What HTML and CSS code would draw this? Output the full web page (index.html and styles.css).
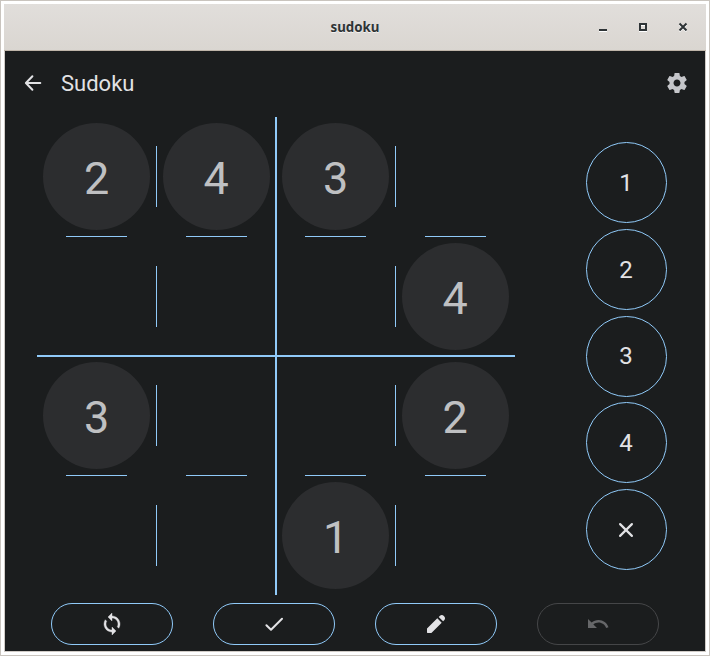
FILE: index.html
```html
<!DOCTYPE html>
<html lang="en">
<head>
<meta charset="utf-8">
<title>sudoku</title>
<link rel="stylesheet" href="styles.css">
</head>
<body>
<div class="window">
  <header class="titlebar">
    <span class="title">sudoku</span>
    <div class="controls">
      <svg viewBox="0 0 10 10"><path class="hi" d="M1 9h8v1H1z"/><path d="M1 7h8v2H1z"/></svg>
      <svg viewBox="0 0 10 10"><path class="hi" d="M1 9h8v1H1zM3 3h4v1H3z"/><path fill-rule="evenodd" d="M1 1h8v8H1zM3 3v4h4V3z"/></svg>
      <svg viewBox="0 0 10 10"><path class="cross hi" d="M1.5 2.5l7 7M8.5 2.5l-7 7"/><path class="cross" d="M1.5 1.5l7 7M8.5 1.5l-7 7"/></svg>
    </div>
  </header>
  <main class="app">
    <div class="appbar">
      <svg class="icon" viewBox="0 0 24 24"><path class="line" d="M19.3 12H5.2M11.4 5.2L4.9 12l6.5 6.8"/></svg>
      <h1>Sudoku</h1>
      <svg class="icon settings" viewBox="0 0 24 24"><path d="M19.43 12.98c.04-.32.07-.64.07-.98s-.03-.66-.07-.98l2.11-1.65c.19-.15.24-.42.12-.64l-2-3.46c-.12-.22-.39-.3-.61-.22l-2.49 1c-.52-.4-1.08-.73-1.69-.98l-.38-2.65C14.46 2.18 14.25 2 14 2h-4c-.25 0-.46.18-.49.42l-.38 2.65c-.61.25-1.17.59-1.69.98l-2.49-1c-.23-.09-.49 0-.61.22l-2 3.46c-.13.22-.07.49.12.64l2.11 1.65c-.04.32-.07.65-.07.98s.03.66.07.98l-2.11 1.65c-.19.15-.24.42-.12.64l2 3.46c.12.22.39.3.61.22l2.49-1c.52.4 1.08.73 1.69.98l.38 2.65c.03.24.24.42.49.42h4c.25 0 .46-.18.49-.42l.38-2.65c.61-.25 1.17-.59 1.69-.98l2.49 1c.23.09.49 0 .61-.22l2-3.46c.12-.22.07-.49-.12-.64zM12 15.5c-1.93 0-3.5-1.57-3.5-3.5s1.57-3.5 3.5-3.5 3.5 1.57 3.5 3.5-1.57 3.5-3.5 3.5z"/></svg>
    </div>
    <div class="game">
      <div class="board">
        <div class="cell"><span class="given">2</span></div>
        <div class="cell"><span class="given">4</span></div>
        <div class="cell"><span class="given">3</span></div>
        <div class="cell"></div>
        <div class="cell"></div>
        <div class="cell"></div>
        <div class="cell"></div>
        <div class="cell"><span class="given">4</span></div>
        <div class="cell"><span class="given">3</span></div>
        <div class="cell"></div>
        <div class="cell"></div>
        <div class="cell"><span class="given">2</span></div>
        <div class="cell"></div>
        <div class="cell"></div>
        <div class="cell"><span class="given">1</span></div>
        <div class="cell"></div>
      </div>
      <div class="pad">
        <div class="key">1</div>
        <div class="key">2</div>
        <div class="key">3</div>
        <div class="key">4</div>
        <div class="key"><svg class="icon" viewBox="0 0 24 24"><path class="line bold" d="M6.1 6.1l11.8 11.8M17.9 6.1L6.1 17.9"/></svg></div>
      </div>
    </div>
    <div class="actions">
      <div class="action"><svg class="icon" viewBox="0 0 24 24"><path class="heavy" d="M12 4V1L8 5l4 4V6c3.31 0 6 2.69 6 6 0 1.01-.25 1.97-.7 2.8l1.46 1.46C19.54 15.03 20 13.57 20 12c0-4.42-3.58-8-8-8zm0 14c-3.31 0-6-2.69-6-6 0-1.01.25-1.97.7-2.8L5.24 7.74C4.46 8.97 4 10.43 4 12c0 4.42 3.58 8 8 8v3l4-4-4-4v3z"/></svg></div>
      <div class="action"><svg class="icon" viewBox="0 0 24 24"><path class="line" d="M4.4 13.2L9 17.8 20 6.8"/></svg></div>
      <div class="action"><svg class="icon" viewBox="0 0 24 24"><path d="M3 16.6V20.5c0 .28.22.5.5.5h3.9L17.7 10.7l-4.4-4.4zM14.7 4.9l4.4 4.4 1.3-1.4c1-1.1.8-2.6-.3-3.7-1.2-1.3-2.9-1.5-4.1-.5z"/></svg></div>
      <div class="action disabled"><svg class="icon" viewBox="0 0 24 24"><path d="M12.5 8c-2.65 0-5.05.99-6.9 2.6L2 7v9h9l-3.62-3.62c1.39-1.16 3.16-1.88 5.12-1.88 3.54 0 6.55 2.31 7.6 5.5l2.37-.78C21.08 11.03 17.15 8 12.5 8z"/></svg></div>
    </div>
  </main>
</div>
</body>
</html>
```
FILE: styles.css
```css
* { box-sizing: border-box; }

body {
  margin: 0;
  height: 656px;
  padding: 3px;
  border: 1px solid #c9c4be;
  background: #fff;
  overflow: hidden;
}

.window { width: 702px; height: 648px; }

.titlebar {
  display: grid;
  grid-template-columns: 1fr auto 1fr;
  align-items: center;
  height: 47px;
  border-bottom: 1px solid #bfb5a9;
  background: linear-gradient(#e1dedb, #dad6d1);
}

.title {
  grid-column: 2;
  font: bold 13.3px/20px "Noto Sans", sans-serif;
  color: #2e3436;
  text-shadow: 0 1px #f3f1ef;
}

.controls {
  display: flex;
  justify-content: flex-end;
  gap: 30px;
  padding-right: 18px;
}

.controls svg { width: 10px; height: 10px; fill: #2e3436; }
.controls .hi { fill: #fff; }
.controls .cross { fill: none; stroke: #2e3436; stroke-width: 2; }
.controls .cross.hi { stroke: #fff; }

.app {
  height: 601px;
  border: 1px solid #d0cbc6;
  border-top: 0;
  background: #1b1d1e;
  color: #e2e2e5;
  font-family: Roboto, sans-serif;
}

.icon { display: block; width: 24px; height: 24px; fill: currentColor; }
.icon .line { fill: none; stroke: currentColor; stroke-width: 2; stroke-linecap: round; stroke-linejoin: round; }
.icon .bold { stroke-width: 2.2; }
.icon .heavy { stroke: currentColor; stroke-width: .4; }

.appbar {
  display: flex;
  align-items: center;
  height: 64px;
  padding: 0 16px;
}

h1 { margin: 0 0 0 16px; padding-top: 2px; font-size: 22px; line-height: 28px; font-weight: 400; }
.settings { margin-left: auto; color: #c5c6ca; }

.game { display: flex; height: 480px; padding: 2px 38.5px 0 32px; justify-content: space-between; }

.board {
  position: relative;
  display: grid;
  grid-template: repeat(4, 119.5px) / repeat(4, 119.5px);
  align-content: start;
}

.board::before, .board::after {
  content: "";
  position: absolute;
  background: #90caf9;
}
.board::before { left: 238px; top: 0; width: 2px; height: 478px; }
.board::after { top: 238px; left: 0; height: 2px; width: 478px; }

.cell { position: relative; display: grid; place-items: center; }

.cell:nth-child(odd)::before,
.cell:nth-child(n+1):nth-child(-n+4)::after,
.cell:nth-child(n+9):nth-child(-n+12)::after {
  content: "";
  position: absolute;
  background: #90caf9;
}
.cell:nth-child(odd)::before { left: 119px; top: 29.2px; width: 1px; height: 61px; }
.cell::after { top: 119px; left: 29.2px; height: 1px; width: 61px; }

.given {
  width: 107px;
  height: 107px;
  border-radius: 50%;
  background: #2c2d2f;
  color: #bfc0c2;
  font-size: 45px;
  line-height: 111.5px;
  text-align: center;
}

.pad { display: flex; flex-direction: column; gap: 5.8px; padding-top: 25px; }

.key {
  display: grid;
  place-items: center;
  width: 81px;
  height: 81px;
  padding-top: .8px;
  border: 1px solid #90caf9;
  border-radius: 50%;
  font-size: 24px;
}

.actions { display: flex; gap: 40.5px; padding: 8px 0 0 46.2px; }

.action {
  display: grid;
  place-items: center;
  width: 121.5px;
  height: 42px;
  border: 1px solid #90caf9;
  border-radius: 21px;
}

.disabled { border-color: #454648; color: #666769; }
```
